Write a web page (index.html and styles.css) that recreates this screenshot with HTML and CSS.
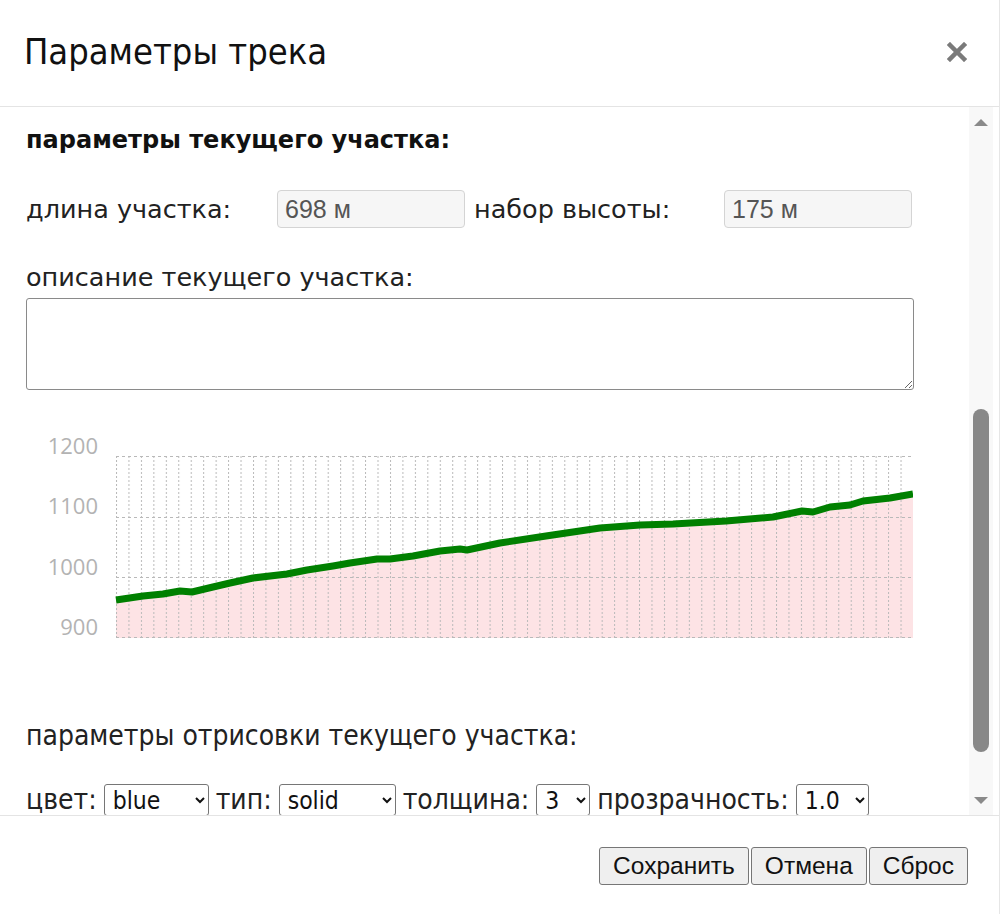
FILE: index.html
```html
<!DOCTYPE html>
<html>
<head>
    <meta charset="utf-8" />
    <link rel="stylesheet" href="styles.css">
</head>
<body>
    <div class="dialog">
        <header class="dialog-header">
            <h1 class="title">Параметры трека</h1>
            <span class="close">
                <svg width="20" height="20" viewBox="0 0 20 20">
                    <path d="M3 3L17 17M17 3L3 17" stroke="#7a7a7a" stroke-width="4.5" stroke-linecap="square" />
                </svg>
            </span>
        </header>

        <section class="dialog-body">
            <div class="content">
                <h2 class="section-title">параметры текущего участка:</h2>

                <div class="stats">
                    <label class="stat-label">длина участка:</label>
                    <input class="stat-value" type="text" value="698 м" readonly />
                    <label class="stat-label">набор высоты:</label>
                    <input class="stat-value" type="text" value="175 м" readonly />
                </div>

                <label class="field-label">описание текущего участка:</label>
                <textarea class="description"></textarea>

                <svg class="profile" width="887" height="232" viewBox="0 0 887 232">
                    <defs>
                        <pattern id="vgrid" x="90" y="35" width="12.453" height="4" patternUnits="userSpaceOnUse">
                            <rect x="0" y="0" width="1" height="2" fill="#b9b9b9" />
                        </pattern>
                    </defs>
                    <!-- area under the elevation line -->
                    <path fill="#fde3e5" d="M90 179 L117 175 L137 173 L154 170 L166 171 L187 166 L204 162 L227 157 L261 153 L281 149 L307 145 L324 142 L351 138 L364 138 L387 135 L414 130 L434 128 L441 129 L474 122 L520 115 L574 107 L614 104 L647 103 L700 100 L747 96 L776 90 L787 91 L804 86 L824 84 L837 80 L864 77 L887 73 L887 217 L90 217 Z" />
                    <!-- grid -->
                    <rect x="90" y="35" width="798" height="182" fill="url(#vgrid)" />
                    <g stroke="#b9b9b9" stroke-width="1" stroke-dasharray="3 3" fill="none">
                        <line x1="90" y1="35.5" x2="887" y2="35.5" />
                        <line x1="90" y1="96.5" x2="887" y2="96.5" />
                        <line x1="90" y1="156.5" x2="887" y2="156.5" />
                        <line x1="90" y1="216.5" x2="887" y2="216.5" />
                    </g>
                    <g class="axis" text-anchor="end">
                        <text x="72" y="33">1200</text>
                        <text x="72" y="93">1100</text>
                        <text x="72" y="154">1000</text>
                        <text x="72" y="214">900</text>
                    </g>
                    <path fill="none" stroke="#008000" stroke-width="7" stroke-linejoin="round" d="M90 179 L117 175 L137 173 L154 170 L166 171 L187 166 L204 162 L227 157 L261 153 L281 149 L307 145 L324 142 L351 138 L364 138 L387 135 L414 130 L434 128 L441 129 L474 122 L520 115 L574 107 L614 104 L647 103 L700 100 L747 96 L776 90 L787 91 L804 86 L824 84 L837 80 L864 77 L887 73" />
                </svg>

                <label class="field-label draw-label">параметры отрисовки текущего участка:</label>

                <div class="draw-params">
                    <span>цвет:</span>
                    <select class="sel-color"><option>blue</option><option>red</option><option>green</option></select>
                    <span>тип:</span>
                    <select class="sel-type"><option>solid</option><option>dashed</option></select>
                    <span>толщина:</span>
                    <select class="sel-width"><option>3</option><option>5</option></select>
                    <span>прозрачность:</span>
                    <select class="sel-opacity"><option>1.0</option><option>0.5</option></select>
                </div>
            </div>

            <div class="scrollbar">
                <span class="arrow up"></span>
                <div class="track">
                    <div class="thumb"></div>
                </div>
                <span class="arrow down"></span>
            </div>
        </section>

        <footer class="dialog-footer">
            <button>Сохранить</button>
            <button>Отмена</button>
            <button>Сброс</button>
        </footer>
    </div>
</body>
</html>
```

FILE: styles.css
```css
* {
    padding: 0;
    margin: 0;
    box-sizing: border-box;
}

body {
    background-color: white;
    overflow: hidden;
}

.dialog {
    width: 1000px;
    height: 914px;
    display: flex;
    flex-direction: column;
    border-right: 1px solid #e6e6e6;
}

.dialog-header {
    height: 107px;
    flex: none;
    display: flex;
    align-items: center;
    justify-content: space-between;
    padding: 0 32px 0 24px;
    border-bottom: 1px solid #e4e4e4;
}

.title {
    font-family: "DejaVu Sans Condensed", "DejaVu Sans", sans-serif;
    font-weight: normal;
    font-size: 36px;
    line-height: 44px;
    color: #111;
    margin-top: -2px;
}

.close {
    display: flex;
    margin-top: -2px;
}

.dialog-body {
    flex: none;
    height: 708px;
    display: flex;
    overflow: hidden;
}

.content {
    flex: 1;
    padding: 18px 0 0 26px;
    color: #222;
    font-family: "DejaVu Sans", sans-serif;
    font-size: 25.5px;
}

.section-title {
    font-family: "DejaVu Sans", sans-serif;
    font-size: 24px;
    font-weight: bold;
    color: #111;
    line-height: 30px;
}

.stats {
    display: flex;
    align-items: center;
    margin-top: 35px;
    width: 887px;
    height: 38px;
}

.stat-label {
    width: 251px;
}

.stat-label + .stat-value + .stat-label {
    width: 259px;
    padding-left: 9px;
}

.stat-value {
    width: 188px;
    height: 38px;
    padding: 0 7px;
    border: 1px solid #d4d4d4;
    border-radius: 4px;
    background-color: #f6f6f6;
    color: #555;
    font-family: "Liberation Sans", Arial, sans-serif;
    font-size: 25px;
    outline: none;
}

.field-label {
    display: block;
    margin-top: 34px;
    line-height: 30px;
}

.description {
    display: block;
    width: 888px;
    height: 92px;
    margin-top: 6px;
    border: 1px solid #8a8a8a;
    border-radius: 3px;
    resize: vertical;
}

.profile {
    display: block;
    margin-top: 31px;
}

.axis text {
    font-family: "Open Sans", sans-serif;
    font-size: 22px;
    fill: #b3b3b3;
}

.draw-label {
    font-family: "DejaVu Sans Condensed", "DejaVu Sans", sans-serif;
    font-size: 28px;
    margin-top: 68px;
}

.draw-params {
    display: flex;
    align-items: center;
    gap: 7px;
    height: 32px;
    margin-top: 33px;
    font-family: "DejaVu Sans Condensed", "DejaVu Sans", sans-serif;
    font-size: 28px;
    line-height: 32px;
}

.draw-params select {
    height: 32px;
    border: 1px solid #767676;
    border-radius: 3px;
    background-color: white;
    font-family: "DejaVu Sans Condensed", "DejaVu Sans", sans-serif;
    font-size: 24.5px;
    color: #111;
    padding-left: 4px;
}

.sel-color {
    width: 105px;
}

.sel-type {
    width: 117px;
}

.sel-width {
    width: 54px;
}

.sel-opacity {
    width: 73px;
}

.scrollbar {
    width: 24px;
    flex: none;
    margin-right: 6px;
    display: flex;
    flex-direction: column;
    align-items: center;
    background-color: #f8f8f8;
}

.track {
    flex: 1;
    width: 100%;
    display: flex;
    justify-content: center;
    padding-top: 283px;
    padding-bottom: 45px;
}

.thumb {
    width: 16px;
    height: 343px;
    border-radius: 8px;
    background-color: #888;
}

.arrow {
    width: 0;
    height: 0;
    border-left: 7px solid transparent;
    border-right: 7px solid transparent;
}

.arrow.up {
    margin-top: 12px;
    border-bottom: 7px solid #8a8a8a;
}

.arrow.down {
    margin-bottom: 11px;
    border-top: 7px solid #8a8a8a;
}

.dialog-footer {
    flex: 1;
    display: flex;
    justify-content: flex-end;
    align-items: flex-start;
    gap: 2px;
    padding: 31px 31px 0 0;
    border-top: 1px solid #e4e4e4;
}

.dialog-footer button {
    height: 38px;
    padding: 0 13px;
    border: 1px solid #767676;
    border-radius: 3px;
    background-color: #efefef;
    color: #111;
    font-family: "Liberation Sans", Arial, sans-serif;
    font-size: 24.5px;
}
```
